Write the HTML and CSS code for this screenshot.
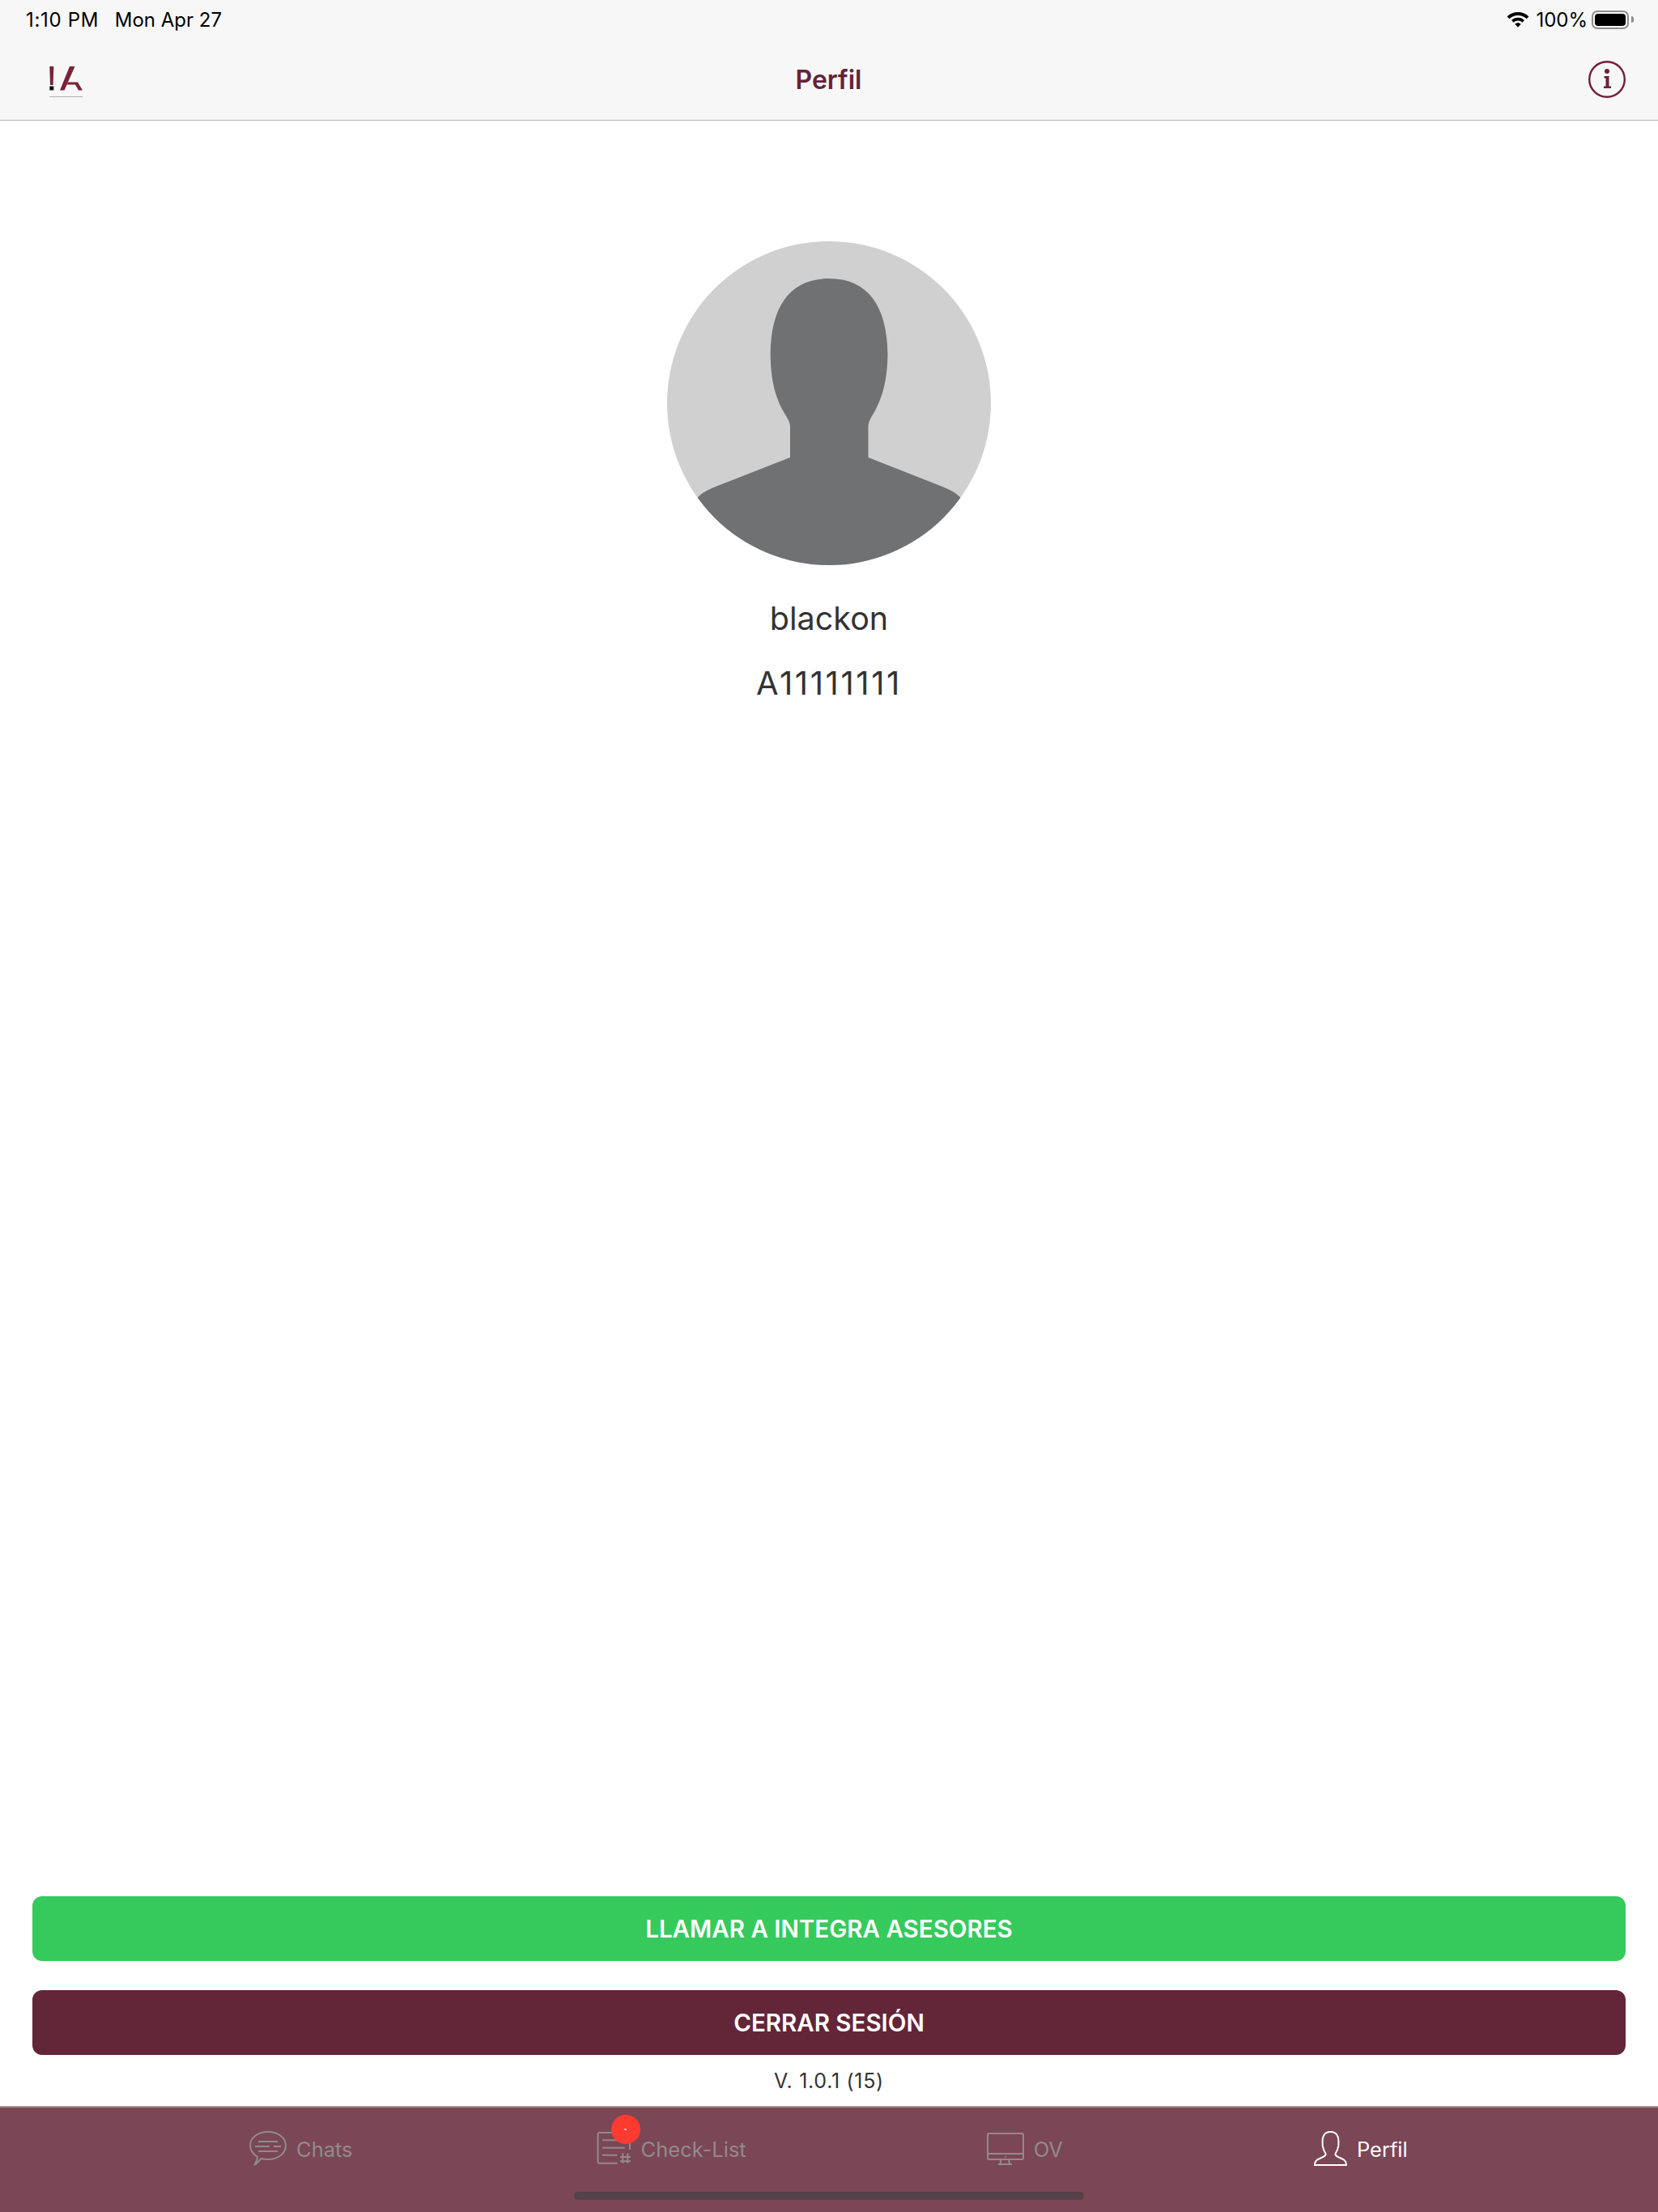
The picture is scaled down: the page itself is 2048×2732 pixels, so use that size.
FILE: index.html
```html
<!DOCTYPE html>
<html lang="es">
<head>
    <meta charset="UTF-8">
    <meta name="viewport" content="width=device-width, initial-scale=1.0">
    <title>Perfil</title>
    <link rel="stylesheet" href="styles.css">
</head>
<body>
    <div class="top-bar">
        <div class="status-bar">
            <div class="status-left">
                <span class="status-time">1:10 PM</span>
                <span>Mon Apr 27</span>
            </div>
            <div class="status-right">
                <svg class="wifi-icon" viewBox="0 0 28 20">
                    <path d="M14 1C8.700 1 3.900 3 .6 6.400l2.700 2.800C6 6.500 9.800 4.900 14 4.900s8 1.600 10.700 4.300l2.700-2.800C24.100 3 19.300 1 14 1z"/>
                    <path d="M14 7.700c-3.100 0-6 1.200-8 3.300l2.700 2.800c1.400-1.400 3.300-2.200 5.300-2.200s3.900.8 5.300 2.200L22 11c-2-2.100-4.900-3.300-8-3.300z"/>
                    <path d="M14 14.200c-1.500 0-2.800.6-3.700 1.500L14 19.700l3.700-4c-.9-.9-2.200-1.500-3.700-1.500z"/>
                </svg>
                <span>100%</span>
                <div class="battery"><div class="battery-fill"></div></div>
                <div class="battery-cap"></div>
            </div>
        </div>
        <div class="nav-bar">
            <svg class="logo" viewBox="0 0 42 38">
                <polygon class="logo-red" points="0.300,0 5.300,0 4.600,23 1,23"/>
                <rect class="logo-dot" x="0.300" y="24.500" width="5" height="5"/>
                <polygon class="logo-red" points="25,0 31.500,0 18.500,29.500 13,29.500"/>
                <polygon class="logo-red" points="23,19.500 35,19.500 41,29.500 36,29.500 32,22.500 21.500,22.500"/>
                <rect class="logo-line" x="0" y="37" width="41" height="1"/>
            </svg>
            <h1 class="nav-title">Perfil</h1>
            <svg class="info-icon" viewBox="0 0 46 46">
                <circle class="info-ring" cx="23" cy="23" r="21.800"/>
                <circle class="info-mark" cx="23" cy="13" r="3"/>
                <path class="info-mark" d="M19.500 19h6v12.500h2.500V34h-9v-2.500h2.500V21.500h-2z"/>
            </svg>
        </div>
    </div>

    <main class="profile">
        <svg class="avatar" viewBox="0 0 400 400">
            <defs>
                <clipPath id="avatarClip"><circle cx="200" cy="200" r="200"/></clipPath>
            </defs>
            <circle cx="200" cy="200" r="200" fill="#d0d0d0"/>
            <path clip-path="url(#avatarClip)" fill="#707173" d="M200 46C152 46 128 80 127.700 140C128 172 134 192 143 209C148 218 152 222 152 230V267L60 303C50 307 44 310 36 318V410H364V318C356 310 350 307 340 303L248.500 267V230C248.500 222 252 218 257 209C266 192 272 172 272.500 140C272 80 248 46 200 46Z"/>
        </svg>
        <p class="user-name">blackon</p>
        <p class="user-id">A11111111</p>
    </main>

    <div class="actions">
        <button class="btn btn-call">LLAMAR A INTEGRA ASESORES</button>
        <button class="btn btn-logout">CERRAR SESIÓN</button>
        <p class="version">V. 1.0.1 (15)</p>
    </div>

    <nav class="tab-bar">
        <div class="tab tab-chats">
            <svg class="tab-icon" viewBox="0 0 46 44">
                <path d="M10 32C4 28 1 24 1 18C1 8 11 1 23 1S45 8 45 18S35 35 23 35C20 35 17 34.600 14.500 34C12 37 9.500 40 6 42C8 39 10 35 10 32Z"/>
                <path d="M11 13H35M7 19H25M30 19H39M11 25H35"/>
            </svg>
            <span>Chats</span>
        </div>
        <div class="tab tab-check">
            <svg class="tab-icon" viewBox="0 0 42 44">
                <path d="M26 2H3.500C2.300 2 1.500 2.800 1.500 4V37.700C1.500 38.900 2.300 39.700 3.500 39.700H25.700M41 14V23"/>
                <path d="M7 11.300H34.700M7 20.700H34.700M7 29.700H25.300M32.300 27.300V39.700M38.300 27.300V39.700M29 32H42M29 37.300H42"/>
            </svg>
            <span class="badge">·</span>
            <span>Check-List</span>
        </div>
        <div class="tab tab-ov">
            <svg class="tab-icon" viewBox="0 0 46 44">
                <rect x="1" y="3" width="44" height="32" rx="2"/>
                <path d="M1 28H45M17.500 35L16.500 41M27 35L28 41M14 41H31"/>
                <circle class="tab-icon-dot" cx="23" cy="31.500" r="1"/>
            </svg>
            <span>OV</span>
        </div>
        <div class="tab tab-perfil active">
            <svg class="tab-icon" viewBox="0 0 41 44">
                <path d="M1 42C1 39 2 37 4 35.500C8 33 14 32 14.500 29C14.800 27 13 26 12 23C11.500 21.500 11.500 20.500 11 19.500C10.500 18.500 10.500 17.500 10.700 16C10 8 12 1 20.500 1C29 1 31 8 30.300 16C30.500 17.500 30.500 18.500 30 19.500C29.500 20.500 29.500 21.500 29 23C28 26 26.200 27 26.500 29C27 32 33 33 37 35.500C39 37 40 39 40 42Z"/>
            </svg>
            <span>Perfil</span>
        </div>
        <div class="home-indicator"></div>
    </nav>
</body>
</html>
```

FILE: styles.css
```css
* {
    box-sizing: border-box;
}

body {
    margin: 0;
    height: 2732px;
    display: flex;
    flex-direction: column;
    background: #ffffff;
    color: #333333;
    font-family: Inter, "Noto Sans", sans-serif;
}

.top-bar {
    height: 149px;
    background: #f7f7f7;
    border-bottom: 1px solid #b4b4b4;
    padding: 0 30px 0 32px;
}

.status-bar {
    height: 48px;
    display: flex;
    justify-content: space-between;
    align-items: center;
    color: #000000;
    font-size: 24px;
}

.status-left {
    display: flex;
    gap: 19.500px;
}

.status-time {
    letter-spacing: 0.7px;
}

.status-right {
    display: flex;
    align-items: center;
}

.wifi-icon {
    width: 28px;
    height: 20px;
    margin-right: 8px;
    fill: #000000;
}

.battery {
    width: 46px;
    height: 23px;
    margin-left: 5px;
    padding: 2px;
    border: 2px solid #8e8e8e;
    border-radius: 7px;
}

.battery-fill {
    height: 100%;
    background: #000000;
    border-radius: 4px;
}

.battery-cap {
    width: 3px;
    height: 8px;
    margin-left: 3px;
    background: #8e8e8e;
    border-radius: 0 3px 3px 0;
}

.nav-bar {
    height: 100px;
    display: grid;
    grid-template-columns: 1fr auto 1fr;
    align-items: center;
    padding: 0 10px 0 29px;
}

.logo {
    width: 42px;
    height: 38px;
    margin-top: 5px;
}

.logo-red {
    fill: #7a2238;
}

.logo-dot {
    fill: #111111;
}

.logo-line {
    fill: #b0b0b0;
}

.nav-title {
    margin: 0 22px 0 0;
    font-size: 32px;
    font-weight: 600;
    color: #63243a;
}

.info-icon {
    width: 46px;
    height: 46px;
    justify-self: end;
}

.info-ring {
    fill: none;
    stroke: #6e2139;
    stroke-width: 2.400;
}

.info-mark {
    fill: #6e2139;
}

.profile {
    flex: 1;
    display: flex;
    flex-direction: column;
    align-items: center;
    padding-top: 149px;
}

.avatar {
    width: 400px;
    height: 400px;
}

.user-name,
.user-id {
    margin: 0;
    font-size: 40px;
    line-height: 48px;
    color: #333333;
}

.user-name {
    margin-top: 42px;
    font-size: 39.500px;
}

.user-id {
    margin-top: 32px;
    letter-spacing: 2.600px;
}

.actions {
    display: flex;
    flex-direction: column;
    padding: 0 40px;
}

.btn {
    height: 80px;
    border: none;
    border-radius: 12px;
    color: #ffffff;
    font-family: inherit;
    font-size: 29.500px;
    font-weight: 600;
}

.btn-call {
    background: #36ca5d;
    margin-bottom: 36px;
}

.btn-logout {
    background: #632538;
}

.version {
    margin: 18px 0 16px;
    text-align: center;
    font-size: 25px;
    line-height: 29px;
    letter-spacing: 0.7px;
    color: #333333;
}

.tab-bar {
    position: relative;
    height: 131px;
    display: flex;
    gap: 302px;
    padding: 29px 0 0 308px;
    background: #7b4655;
    border-top: 2px solid #a5939a;
    color: #908b8d;
    font-size: 25.500px;
}

.tab {
    position: relative;
    height: 44px;
    display: flex;
    align-items: center;
    gap: 12px;
}

.tab-icon {
    height: 44px;
    fill: none;
    stroke: currentColor;
    stroke-width: 2;
}

.tab-icon-dot {
    fill: currentColor;
    stroke: none;
}

.tab-chats .tab-icon,
.tab-ov .tab-icon {
    width: 46px;
}

.tab-check {
    gap: 13px;
    margin-left: -1px;
}

.tab-check .tab-icon {
    width: 42px;
}

.tab-perfil .tab-icon {
    width: 41px;
}

.tab-ov {
    margin-left: -5px;
}

.tab-perfil {
    margin-left: 8px;
}

.tab.active {
    color: #ffffff;
}

.badge {
    position: absolute;
    top: -20px;
    left: 18px;
    width: 36px;
    height: 36px;
    display: flex;
    align-items: center;
    justify-content: center;
    border-radius: 50%;
    background: #ff3b30;
    color: #ffffff;
    font-size: 16px;
}

.home-indicator {
    position: absolute;
    left: 709px;
    bottom: 15px;
    width: 630px;
    height: 10px;
    border-radius: 5px;
    background: #564049;
}
```
